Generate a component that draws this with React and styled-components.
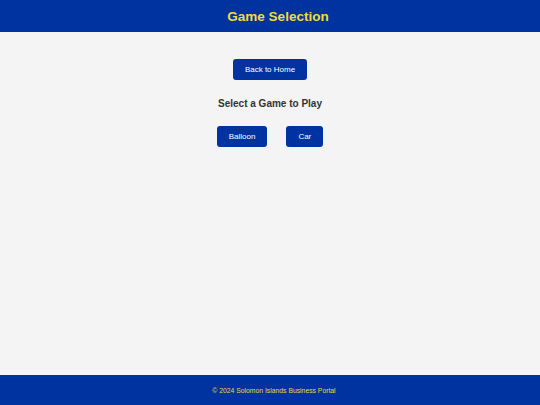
import React from "react"
import styled, { createGlobalStyle } from "styled-components"

const GlobalStyle = createGlobalStyle`
  html, body {
    margin: 0;
    padding: 0;
    background: #f4f4f4;
    font-family: "Liberation Sans", Arial, sans-serif;
  }
`

const Page = styled.div`
  display: flex;
  flex-direction: column;
  min-height: 100vh;
`

const Header = styled.header`
  background: #0033a0;
  height: 32px;
  display: flex;
  align-items: center;
  justify-content: center;
  padding-left: 16px;
`

const Title = styled.h1`
  margin: 0;
  color: #f2dc36;
  font-size: 13.5px;
  font-weight: 700;
`

const Main = styled.main`
  flex: 1;
  display: flex;
  flex-direction: column;
  align-items: center;
  padding-top: 27px;
`

const Button = styled.button`
  background: #0033a0;
  color: #fff;
  border: none;
  border-radius: 3px;
  font-family: inherit;
  font-size: 8px;
  height: 21px;
  padding: 0 ${props => (props.wide ? "11.5px" : "12px")};
  cursor: pointer;
`

const Heading = styled.h2`
  margin: 18px 0 0;
  color: #333;
  font-size: 10px;
  font-weight: 700;
`

const GameRow = styled.div`
  display: flex;
  gap: 19px;
  margin-top: 17px;
`

const Footer = styled.footer`
  background: #0033a0;
  height: 30px;
  display: flex;
  align-items: center;
  justify-content: center;
  padding-left: 8px;
  color: #ecd83e;
  font-size: 6.8px;
`

const App = () => {
  const games = ["Balloon", "Car"]
  return (
    <Page>
      <GlobalStyle />
      <Header>
        <Title>Game Selection</Title>
      </Header>
      <Main>
        <Button wide>Back to Home</Button>
        <Heading>Select a Game to Play</Heading>
        <GameRow>
          {games.map(game => (
            <Button key={game}>{game}</Button>
          ))}
        </GameRow>
      </Main>
      <Footer>© 2024 Solomon Islands Business Portal</Footer>
    </Page>
  )
}

export default App
